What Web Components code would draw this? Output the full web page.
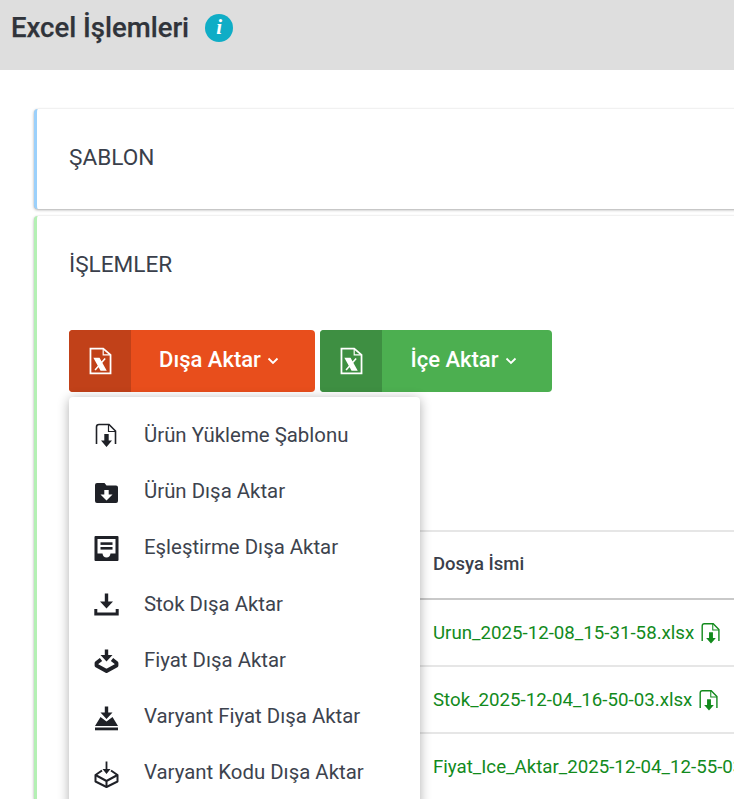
<!DOCTYPE html>
<html lang="tr">
<head>
<meta charset="utf-8">
<title>Excel İşlemleri</title>
<style>
html,body{margin:0;height:100%;background:#fff;overflow:hidden}
body{font-family:Roboto,"Liberation Sans",sans-serif;color:#3a3f4b}
</style>
</head>
<body>
<x-page-header>Excel İşlemleri</x-page-header>
<x-content>
  <x-card accent="#9bd0fb" style="height:100px">ŞABLON</x-card>
  <x-card accent="#b4f0b4">
    İŞLEMLER
    <div slot="body">
      <x-actions></x-actions>
      <x-file-table></x-file-table>
    </div>
  </x-card>
</x-content>

<script>
const ICONS={
  note:'<path d="M2.500 21V4Q2.500 1.500 5 1.500H15L21.500 8V21" fill="none" stroke="currentColor" stroke-width="1.600"/><path d="M14.500 1.500V8.500H21.500" fill="none" stroke="currentColor" stroke-width="1.200"/><path d="M10.300 11H14.700V17.500H18L12.500 24L7 17.500H10.300Z" fill="currentColor"/>',
  folder:'<g transform="translate(0 2)"><path d="M1 4Q1 2 3 2H10.500L12.500 4.500H22Q24 4.500 24 6.500V20Q24 22 22 22H3Q1 22 1 20Z" fill="currentColor"/><path d="M10.300 9H14.700V13.500H18.500L12.500 19.500L6.500 13.500H10.300Z" fill="#fff"/></g>',
  inbox:'<g transform="translate(0 1)"><path fill-rule="evenodd" d="M1.500 0H23.500Q24.500 0 24.500 1V24Q24.500 25 23.500 25H1.500Q.5 25 .5 24V1Q.5 0 1.500 0ZM3.500 3V17.500H8.500Q9 21.500 12.500 21.500T16.500 17.500H21.500V3Z" fill="currentColor"/><rect x="6.500" y="6.300" width="12" height="2.600" fill="currentColor"/><rect x="6.500" y="11" width="12" height="2.600" fill="currentColor"/></g>',
  tray:'<g transform="translate(0 2.500)"><path d="M10.800 0H14.200V8H19L12.500 15L6 8H10.800Z" fill="currentColor"/><path d="M1.800 15.500V20.500H23.200V15.500" fill="none" stroke="currentColor" stroke-width="3"/></g>',
  diamond:'<g transform="translate(0 2.500)"><path d="M10.800 0H14.200V5.500H18.500L12.500 12L6.500 5.500H10.800Z" fill="currentColor"/><path d="M7 10L2.500 13.500V16L12.500 21.500L22.500 16V13.500L18 10" fill="none" stroke="currentColor" stroke-width="3.800" stroke-linejoin="round"/></g>',
  mountain:'<g transform="translate(0 2.500)"><path d="M10.800 0H14.200V6H18.500L12.500 12.500L6.500 6H10.800Z" fill="currentColor"/><path d="M1 19.500L6.500 10.500L12.500 15L18.500 10.500L24 19.500Z" fill="currentColor"/><rect x="1" y="21" width="23" height="2.800" fill="currentColor"/></g>',
  box:'<g transform="translate(0 1.500)"><path d="M11.600 0H13.400V7.500H16.500L12.500 12.500L8.500 7.500H11.600Z" fill="currentColor"/><path d="M8 9L1.500 13.500V20L12.500 25.500L23.500 20V13.500L17 9" fill="none" stroke="currentColor" stroke-width="2" stroke-linejoin="round"/><path d="M1.500 13.500L12.500 19.500L23.500 13.500M12.500 19.500V25.500" fill="none" stroke="currentColor" stroke-width="2"/></g>',
  sheet:'<path d="M1.500 27V1.500H14.500L22 8V27Z" fill="none" stroke="currentColor" stroke-width="1.800"/><path d="M14.500 1.500V8H22" fill="none" stroke="currentColor" stroke-width="1.200"/><path d="M5.800 11.800H10.300L16.800 23.500H12.300ZM16.500 11.800L6.200 23.500" fill="currentColor" stroke="currentColor" stroke-width="1.600"/>'
};
function define(name,css,html,setup){
  customElements.define(name,class extends HTMLElement{
    constructor(){super();
      const r=this.attachShadow({mode:'open'});
      r.innerHTML='<style>'+css+'</style>'+html;
    }
    connectedCallback(){if(setup)setup(this,this.shadowRoot)}
  });
}
define('x-icon',':host{display:inline-flex;line-height:0;flex:none}svg{display:block;overflow:visible}','<svg fill="none"></svg>',(h,r)=>{
  const s=r.querySelector('svg');
  s.setAttribute('width',h.getAttribute('w')||25);s.setAttribute('height',h.getAttribute('h')||25);
  s.setAttribute('viewBox',h.getAttribute('vb')||'0 0 25 25');
  s.innerHTML=ICONS[h.getAttribute('name')];
});
define('x-page-header',
 `:host{display:flex;align-items:center;height:70px;box-sizing:border-box;background:#dedede;padding:0 0 15px 11px;gap:16px}
  h1{margin:0;font:500 27.500px/1 Roboto,sans-serif;color:#30343b;-webkit-text-stroke:.25px #30343b}
  b{width:28px;height:28px;border-radius:50%;background:#0fadc6;color:#fff;display:flex;align-items:center;justify-content:center;font:italic 700 21px/1 "Liberation Serif",serif}`,
 '<h1><slot></slot></h1><b>i</b>');
define('x-content',':host{display:flex;flex-direction:column;gap:7px;padding:39px 0 0 34px}','<slot></slot>');
define('x-card',
 `:host{display:block;box-sizing:border-box;margin-right:-30px;background:#fff;border-left:3px solid var(--accent);border-radius:4px;box-shadow:0 1px 3px rgba(0,0,0,.32),0 0 1px rgba(0,0,0,.12);padding-left:32px}
  .t{font:400 22.600px/1 Roboto,sans-serif;color:#3a3f4b;padding-top:38px}`,
 '<div class="t"><slot></slot></div><slot name="body"></slot>',
 (h)=>{h.style.setProperty('--accent',h.getAttribute('accent'))});
define('x-split-button',
 `:host{display:inline-flex;height:62px;border-radius:4px;overflow:hidden;background:var(--c);color:#fff}
  .i{width:62px;background:var(--d);display:flex;align-items:center;justify-content:center}
  .l{flex:1;display:flex;align-items:center;justify-content:center;gap:6px;font:500 22px/1 Roboto,sans-serif;padding:0 var(--pr,0) 2px 0}
  svg{display:block}
  .l svg{margin-top:2px}`,
 `<span class="i"><x-icon name="sheet" w="23" h="28" vb="0 0 23.500 28.500"></x-icon></span>
  <span class="l"><slot></slot><svg width="12" height="8" viewBox="0 0 12 8"><path d="M1.500 1.500L6 6L10.500 1.500" fill="none" stroke="#fff" stroke-width="1.800"/></svg></span>`,
 (h)=>{for(const k of ['c','d','pr'])if(h.getAttribute(k))h.style.setProperty('--'+k,h.getAttribute(k));h.style.width=h.getAttribute('w')+'px'});
define('x-menu-item',
 `:host{display:flex;align-items:center;height:56.200px;padding-left:25px;gap:25px;color:#3d434e;font:400 20.400px/1 Roboto,sans-serif;white-space:nowrap}
  svg{display:block;overflow:visible;color:#1f2127;flex:none}`,
 '<svg width="25" height="25" viewBox="0 0 25 25"></svg><span><slot></slot></span>',
 (h,r)=>{r.querySelector('svg').innerHTML=ICONS[h.getAttribute('icon')];});
define('x-menu',
 `:host{position:absolute;z-index:5;left:0;top:67px;width:351px;background:#fff;border-radius:4px;box-shadow:0 2px 12px rgba(0,0,0,.32);padding:10.500px 0 40px}`,
 '<slot></slot>');
define('x-actions',
 `:host{display:flex;position:relative;gap:5px;margin-top:53px;height:62px}`,
 `<x-split-button c="#e84e1c" d="#c14119" w="246" pr="8px">Dışa Aktar</x-split-button>
  <x-split-button c="#4caf50" d="#3e8f42" w="232" pr="7px">İçe Aktar</x-split-button>
  <x-menu>
    <x-menu-item icon="note">Ürün Yükleme Şablonu</x-menu-item>
    <x-menu-item icon="folder">Ürün Dışa Aktar</x-menu-item>
    <x-menu-item icon="inbox">Eşleştirme Dışa Aktar</x-menu-item>
    <x-menu-item icon="tray">Stok Dışa Aktar</x-menu-item>
    <x-menu-item icon="diamond">Fiyat Dışa Aktar</x-menu-item>
    <x-menu-item icon="mountain">Varyant Fiyat Dışa Aktar</x-menu-item>
    <x-menu-item icon="box">Varyant Kodu Dışa Aktar</x-menu-item>
  </x-menu>`);
define('x-file-row',
 `:host{display:flex;align-items:center;gap:6px;height:67px;box-sizing:border-box;padding:2px 0 0 364px;border-bottom:2px solid #e6e6e6;white-space:nowrap;color:#128a1c;font:400 18.700px/1 Roboto,sans-serif}
  :host([head]){height:70px;padding-top:0;border-top:2px solid #e6e6e6;border-bottom-color:#c9c9c9;color:#3a3f4b;font-weight:500;font-size:18.500px}
  x-icon{color:#128a1c}`,
 '<slot></slot><x-icon name="note" w="22" h="25"></x-icon>',
 (h,r)=>{if(!h.hasAttribute('dl'))r.querySelector('x-icon').remove()});
define('x-file-table',
 `:host{display:block;margin-top:138px;margin-left:0;width:760px}`,
 `<x-file-row head>Dosya İsmi</x-file-row>
  <x-file-row dl>Urun_2025-12-08_15-31-58.xlsx</x-file-row>
  <x-file-row dl>Stok_2025-12-04_16-50-03.xlsx</x-file-row>
  <x-file-row>Fiyat_Ice_Aktar_2025-12-04_12-55-03.xlsx</x-file-row>`);
</script>
</body>
</html>
